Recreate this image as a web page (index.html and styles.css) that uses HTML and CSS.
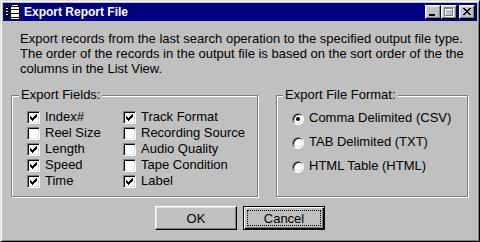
FILE: index.html
```html
<!DOCTYPE html>
<html>
<head>
<meta charset="utf-8">
<title>Export Report File</title>
<link rel="stylesheet" href="styles.css">
</head>
<body>
<div class="window">
  <div class="titlebar">
    <svg class="app-icon" width="16" height="16" viewBox="0 0 16 16" shape-rendering="crispEdges">
      <rect x="0" y="3" width="5" height="11" fill="#000"/>
      <rect x="1" y="4" width="2" height="1" fill="#fff"/>
      <rect x="1" y="7" width="2" height="1" fill="#fff"/>
      <rect x="1" y="10" width="2" height="1" fill="#fff"/>
      <path d="M5 2h10v14H5z" fill="#000"/>
      <path d="M6 3h8v2H6z" fill="#fff"/>
      <path d="M6 6h8v3H6z" fill="#fff"/>
      <path d="M6 10h8v3H6z" fill="#fff"/>
      <path d="M6 14h8v1H6z" fill="#fff"/>
      <path d="M6 0h8v2H6z" fill="#000"/>
      <path d="M7 1h6v1H7z" fill="#fff"/>
    </svg>
    <span class="title">Export Report File</span>
    <div class="caption-buttons">
      <span class="cap-btn">
        <svg width="14" height="12" viewBox="0 0 14 12" shape-rendering="crispEdges"><rect x="3" y="8" width="6" height="2" fill="#000"/></svg>
      </span>
      <span class="cap-btn">
        <svg width="14" height="12" viewBox="0 0 14 12" shape-rendering="crispEdges">
          <path d="M3 2h9v9H3z M4 4v6h7V4z" fill="#fff" fill-rule="evenodd"/>
          <path d="M2 1h9v9H2z M3 3v6h7V3z" fill="#808080" fill-rule="evenodd"/>
        </svg>
      </span>
      <span class="cap-btn close">
        <svg width="14" height="12" viewBox="0 0 14 12" shape-rendering="crispEdges">
          <path d="M3 2h2v1h1v1h2V3h1V2h2v1h-1v1h-1v1h-1v1h1v1h1v1h1v1H9V8H8V7H6v1H5v1H3V8h1V7h1V6h1V5H5V4H4V3H3z" fill="#000"/>
        </svg>
      </span>
    </div>
  </div>

  <p class="desc">Export records from the last search operation to the specified output file type.<br>The order of the records in the output file is based on the sort order of the the<br>columns in the List View.</p>

  <div class="groups">
    <div class="group fields">
      <div class="legend">Export Fields:</div>
      <div class="checks">
        <label class="check"><span class="cb on"><svg width="9" height="9" viewBox="0 0 9 9" shape-rendering="crispEdges"><path d="M7 1h1v1H7z M6 2h2v1H6z M1 3h1v1H1z M5 3h3v1H5z M1 4h2v1H1z M4 4h3v1H4z M1 5h5v1H1z M2 6h3v1H2z M3 7h1v1H3z" fill="#000"/></svg></span>Index#</label>
        <label class="check"><span class="cb"></span>Reel Size</label>
        <label class="check"><span class="cb on"><svg width="9" height="9" viewBox="0 0 9 9" shape-rendering="crispEdges"><path d="M7 1h1v1H7z M6 2h2v1H6z M1 3h1v1H1z M5 3h3v1H5z M1 4h2v1H1z M4 4h3v1H4z M1 5h5v1H1z M2 6h3v1H2z M3 7h1v1H3z" fill="#000"/></svg></span>Length</label>
        <label class="check"><span class="cb on"><svg width="9" height="9" viewBox="0 0 9 9" shape-rendering="crispEdges"><path d="M7 1h1v1H7z M6 2h2v1H6z M1 3h1v1H1z M5 3h3v1H5z M1 4h2v1H1z M4 4h3v1H4z M1 5h5v1H1z M2 6h3v1H2z M3 7h1v1H3z" fill="#000"/></svg></span>Speed</label>
        <label class="check"><span class="cb on"><svg width="9" height="9" viewBox="0 0 9 9" shape-rendering="crispEdges"><path d="M7 1h1v1H7z M6 2h2v1H6z M1 3h1v1H1z M5 3h3v1H5z M1 4h2v1H1z M4 4h3v1H4z M1 5h5v1H1z M2 6h3v1H2z M3 7h1v1H3z" fill="#000"/></svg></span>Time</label>
        <label class="check"><span class="cb on"><svg width="9" height="9" viewBox="0 0 9 9" shape-rendering="crispEdges"><path d="M7 1h1v1H7z M6 2h2v1H6z M1 3h1v1H1z M5 3h3v1H5z M1 4h2v1H1z M4 4h3v1H4z M1 5h5v1H1z M2 6h3v1H2z M3 7h1v1H3z" fill="#000"/></svg></span>Track Format</label>
        <label class="check"><span class="cb"></span>Recording Source</label>
        <label class="check"><span class="cb"></span>Audio Quality</label>
        <label class="check"><span class="cb"></span>Tape Condition</label>
        <label class="check"><span class="cb on"><svg width="9" height="9" viewBox="0 0 9 9" shape-rendering="crispEdges"><path d="M7 1h1v1H7z M6 2h2v1H6z M1 3h1v1H1z M5 3h3v1H5z M1 4h2v1H1z M4 4h3v1H4z M1 5h5v1H1z M2 6h3v1H2z M3 7h1v1H3z" fill="#000"/></svg></span>Label</label>
      </div>
    </div>

    <div class="group format">
      <div class="legend">Export File Format:</div>
      <div class="radios">
        <label class="radio"><span class="rb on"></span>Comma Delimited (CSV)</label>
        <label class="radio"><span class="rb"></span>TAB Delimited (TXT)</label>
        <label class="radio"><span class="rb"></span>HTML Table (HTML)</label>
      </div>
    </div>
  </div>

  <div class="buttons">
    <button class="btn">OK</button>
    <button class="btn default">Cancel</button>
  </div>
</div>
</body>
</html>
```

FILE: styles.css
```css
* { box-sizing: border-box; }

html, body {
  margin: 0;
  padding: 0;
  background: #c0c0c0;
}

body {
  font-family: "Liberation Sans", Arial, sans-serif;
  font-size: 13px;
  color: #000;
}

.window {
  width: 480px;
  height: 242px;
  background: #c0c0c0;
  border: 1px solid;
  border-color: #dfdfdf #000 #000 #dfdfdf;
  box-shadow: inset 1px 1px 0 #fff, inset -1px -1px 0 #808080;
  padding: 2px;
}

.titlebar {
  height: 18px;
  background: #000080;
  display: flex;
  align-items: center;
  color: #fff;
}

.app-icon {
  display: block;
  margin-left: 2px;
  flex: none;
}

.title {
  margin-left: 3px;
  font-weight: bold;
  font-size: 12px;
  line-height: 18px;
  white-space: nowrap;
}

.caption-buttons {
  margin-left: auto;
  margin-right: 2px;
  display: flex;
  align-items: center;
}

.cap-btn {
  width: 16px;
  height: 14px;
  background: #c0c0c0;
  border: 1px solid;
  border-color: #fff #000 #000 #fff;
  box-shadow: inset -1px -1px 0 #808080, inset 1px 1px 0 #dfdfdf;
  display: block;
}

.cap-btn svg { display: block; }

.cap-btn.close { margin-left: 2px; }

.desc {
  margin: 10px 0 0 17px;
  line-height: 15px;
  white-space: nowrap;
}

.groups {
  display: flex;
  gap: 18px;
  margin: 19px 0 0 8px;
}

.group {
  height: 102px;
  border: 1px solid #808080;
  box-shadow: 1px 1px 0 #fff, inset 1px 1px 0 #fff;
}

.group.fields { width: 247px; }
.group.format { width: 192px; }

.legend {
  width: max-content;
  margin-top: -9px;
  margin-left: 7px;
  padding: 0 2px;
  line-height: 15px;
  background: #c0c0c0;
}

.format .legend { margin-left: 6px; }

.checks {
  margin-top: 7px;
  padding-left: 15px;
  display: grid;
  grid-template-columns: 96px auto;
  grid-template-rows: repeat(5, 16px);
  grid-auto-flow: column;
}

.check {
  display: flex;
  align-items: flex-start;
  gap: 5px;
  line-height: 16px;
  white-space: nowrap;
}

.cb {
  flex: none;
  width: 13px;
  height: 13px;
  margin-top: 2px;
  background: #fff;
  border: 1px solid;
  border-color: #808080 #fff #fff #808080;
  box-shadow: inset 1px 1px 0 #000, inset -1px -1px 0 #dfdfdf;
  padding: 1px;
}

.cb svg { display: block; }

.radios {
  margin-top: 8px;
  padding-left: 15px;
  display: flex;
  flex-direction: column;
  gap: 8px;
}

.radio {
  display: flex;
  align-items: flex-start;
  gap: 5px;
  line-height: 16px;
  white-space: nowrap;
}

.rb {
  flex: none;
  width: 12px;
  height: 12px;
  margin-top: 3px;
  border-radius: 50%;
  background: #fff;
  border: 1px solid;
  border-color: #808080 #fff #fff #808080;
  box-shadow: inset 1px 1px 0 #000, inset -1px -1px 0 #dfdfdf;
  display: flex;
  align-items: center;
  justify-content: center;
}

.rb.on::after {
  content: "";
  width: 4px;
  height: 4px;
  border-radius: 50%;
  background: #000;
}

.buttons {
  margin-top: 9px;
  display: flex;
  justify-content: center;
  gap: 6px;
}

.btn {
  width: 82px;
  height: 24px;
  padding: 0;
  margin: 0;
  font-family: "Liberation Sans", Arial, sans-serif;
  font-size: 13px;
  color: #000;
  background: #c0c0c0;
  border: 1px solid;
  border-color: #fff #000 #000 #fff;
  box-shadow: inset -1px -1px 0 #808080, inset 1px 1px 0 #dfdfdf;
  border-radius: 0;
  line-height: 15px;
}

.btn.default {
  border-color: #000;
  box-shadow: inset 1px 1px 0 #fff, inset -1px -1px 0 #000, inset -2px -2px 0 #808080;
  outline: 1px dotted #000;
  outline-offset: -5px;
}
```
